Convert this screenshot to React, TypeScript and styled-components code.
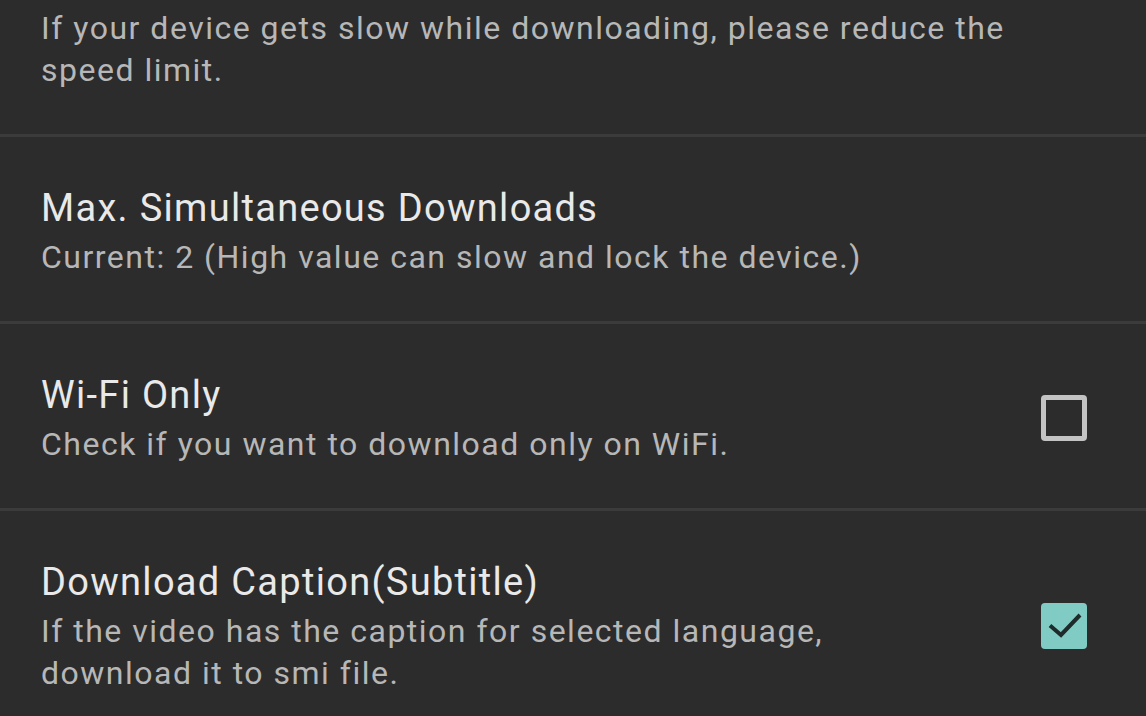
import React from "react";
import styled, { createGlobalStyle } from "styled-components";

const Global = createGlobalStyle`
  html, body { margin: 0; padding: 0; background: #2c2c2c; }
  body { font-family: Roboto, "Noto Sans", sans-serif; overflow: hidden; }
`;

const Screen = styled.div`
  width: 1146px;
  height: 716px;
  overflow: hidden;
  background: #2c2c2c;
`;

const List = styled.div`
  display: flex;
  flex-direction: column;
  margin-top: -92px;
`;

const Row = styled.div`
  display: flex;
  align-items: center;
  gap: 24px;
  padding: 47px 59px 43px 41px;
  border-bottom: 3px solid #3b3b3b;
`;

const Texts = styled.div`
  flex: 1;
  display: flex;
  flex-direction: column;
`;

const Title = styled.div`
  font-size: 38px;
  line-height: 48px;
  letter-spacing: 1.3px;
  color: #e9e9e9;
  margin-bottom: 4px;
`;

const Summary = styled.div<{ $withCheck?: boolean }>`
  font-size: 32px;
  line-height: 42px;
  letter-spacing: 1.5px;
  color: #b7b7b7;
  max-width: ${(p) => (p.$withCheck ? "800px" : "1000px")};
`;

const Box = styled.div<{ $checked?: boolean }>`
  width: 46px;
  height: 46px;
  box-sizing: border-box;
  border-radius: 4px;
  border: ${(p) => (p.$checked ? "none" : "5px solid #c3c3c3")};
  background: ${(p) => (p.$checked ? "#80cbc4" : "transparent")};
  display: flex;
  align-items: center;
  justify-content: center;
  flex-shrink: 0;
`;

type Item = { title: string; summary: string; check?: boolean; checked?: boolean };

const items: Item[] = [
  {
    title: "Download Speed Limit",
    summary: "If your device gets slow while downloading, please reduce the speed limit.",
  },
  {
    title: "Max. Simultaneous Downloads",
    summary: "Current: 2 (High value can slow and lock the device.)",
  },
  {
    title: "Wi-Fi Only",
    summary: "Check if you want to download only on WiFi.",
    check: true,
    checked: false,
  },
  {
    title: "Download Caption(Subtitle)",
    summary: "If the video has the caption for selected language, download it to smi file.",
    check: true,
    checked: true,
  },
];

function CheckMark() {
  return (
    <svg width="46" height="46" viewBox="0 0 46 46">
      <path d="M9 22.5L20 32L39 12" fill="none" stroke="#1f2b2a" strokeWidth="4" strokeLinecap="butt" strokeLinejoin="miter" />
    </svg>
  );
}

export default function App() {
  return (
    <Screen>
      <Global />
      <List>
        {items.map((it, i) => (
          <Row key={i}>
            <Texts>
              <Title>{it.title}</Title>
              <Summary $withCheck={it.check}>{it.summary}</Summary>
            </Texts>
            {it.check && <Box $checked={it.checked}>{it.checked && <CheckMark />}</Box>}
          </Row>
        ))}
      </List>
    </Screen>
  );
}
